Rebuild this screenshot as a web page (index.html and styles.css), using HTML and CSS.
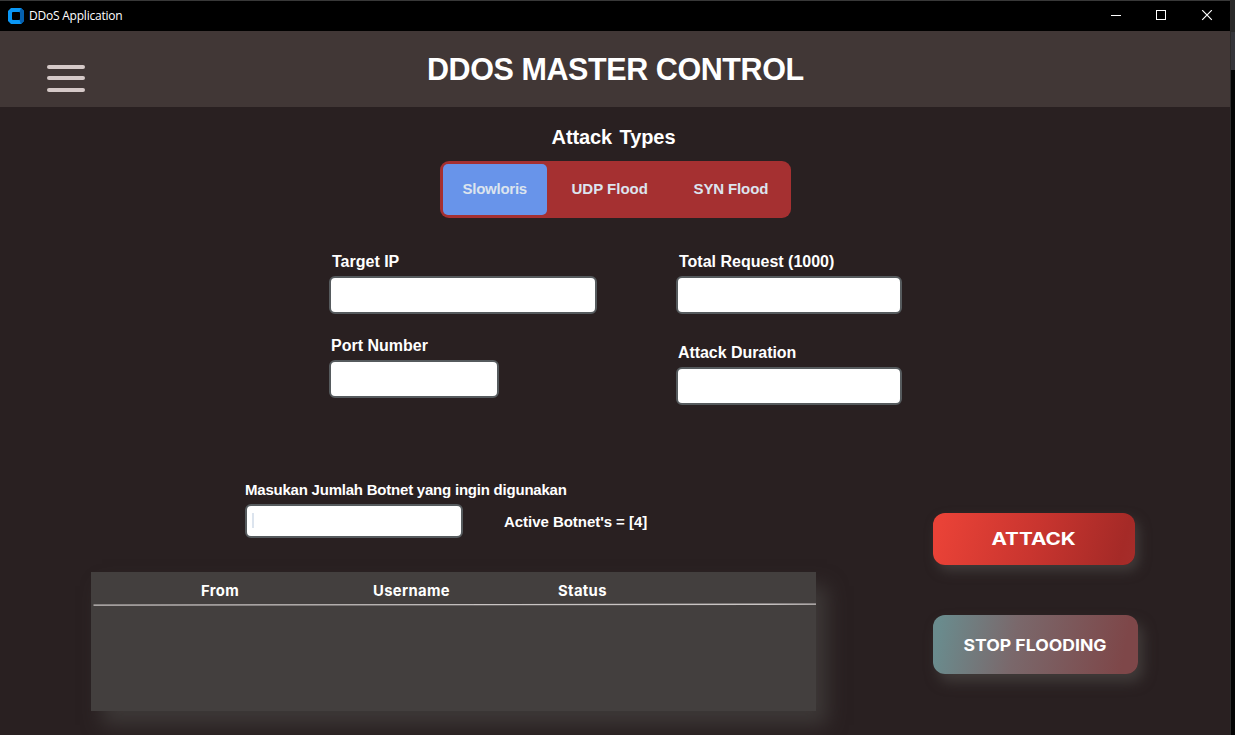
FILE: index.html
```html
<!DOCTYPE html>
<html lang="id">
<head>
<meta charset="utf-8">
<title>DDoS Application</title>
<link rel="stylesheet" href="styles.css">
</head>
<body>
<div class="window">
  <div class="titlebar">
    <svg class="app-icon" width="16" height="16" viewBox="0 0 16 16">
      <path fill="#0a97f5" d="M3 0H13L16 3V13L13 16H3L0 13V3Z"/>
      <path fill="#0560b0" d="M13 0L16 3V13L13 16L11.500 12V4Z"/>
      <rect x="4" y="4" width="8" height="8" rx="1" fill="#000"/>
    </svg>
    <span class="app-name">DDoS Application</span>
    <svg class="controls" width="102" height="12" viewBox="0 0 102 12" fill="none" stroke="#fff">
      <path d="M0 5.500H10"/>
      <rect x="45.500" y="0.500" width="9" height="9"/>
      <path d="M91.200 0.200L100.800 9.800M100.800 0.200L91.200 9.800" stroke-width="1.200"/>
    </svg>
  </div>
  <header class="header">
    <div class="menu"><i></i><i></i><i></i></div>
    <h1>DDOS MASTER CONTROL</h1>
  </header>
  <main class="main">
    <section class="types">
      <h2>Attack Types</h2>
      <div class="segments">
        <span class="segment selected">Slowloris</span>
        <span class="segment udp">UDP Flood</span>
        <span class="segment syn">SYN Flood</span>
      </div>
    </section>
    <section class="form">
      <div class="column target">
        <label class="ip">Target IP</label>
        <div class="field"></div>
        <label class="port">Port Number</label>
        <div class="field short"></div>
      </div>
      <div class="column limits">
        <label class="total">Total Request (1000)</label>
        <div class="field"></div>
        <label class="duration">Attack Duration</label>
        <div class="field"></div>
      </div>
    </section>
    <section class="bottom">
      <div class="bots">
        <label class="amount">Masukan Jumlah Botnet yang ingin digunakan</label>
        <div class="bot-row">
          <div class="field count"><span class="caret"></span></div>
          <span class="active">Active Botnet's = [4]</span>
        </div>
        <div class="table">
          <div class="thead"><span class="from">From</span><span class="user">Username</span><span class="status">Status</span></div>
          <svg class="rule" width="725" height="3" viewBox="0 0 725 3"><path d="M2.500 2.100L725 1.200" stroke="#c9c4c3" stroke-width="1.300"/></svg>
        </div>
      </div>
      <div class="actions">
        <div class="button attack"><span>ATTACK</span></div>
        <div class="button stop"><span>STOP FLOODING</span></div>
      </div>
    </section>
  </main>
</div>
<div class="edge"><div class="edge-top"></div><div class="edge-mid"></div></div>
</body>
</html>
```
FILE: styles.css
```css
* { box-sizing: border-box; }
body { margin: 0; width: 1235px; height: 735px; display: flex; overflow: hidden; background: #000; color: #fff; font-family: "Liberation Sans", Arial, sans-serif; font-weight: bold; }
.window { width: 1230px; height: 735px; display: flex; flex-direction: column; background: #292021; overflow: hidden; }
.edge { width: 5px; background: #040404; border-left: 1px solid #2c2a2a; }
.edge-top { height: 32px; background: #292929; }
.edge-mid { height: 38px; background: #35353a; }

.titlebar { height: 31px; flex: none; display: flex; align-items: center; padding: 0 17px 0 8px; background: #000; border-top: 1px solid #383838; }
.app-icon { margin: -1px 5px 0 0; }
.app-name { font: 12px/16px "Open Sans", "Noto Sans", sans-serif; letter-spacing: -0.220px; white-space: nowrap; }
.controls { margin-left: auto; }

.header { height: 76px; flex: none; display: flex; background: #413736; }
.menu { width: 38.500px; margin: 33.500px 0 0 46.500px; display: flex; flex-direction: column; gap: 7.500px; }
.menu i { height: 4px; border-radius: 2px; background: #d5c9c8; }
h1 { margin: 20px 0 0 342px; font-size: 30.500px; line-height: 36px; letter-spacing: -0.420px; white-space: nowrap; }

.main { height: 628px; }
.types { height: 142px; padding-top: 18px; display: flex; flex-direction: column; align-items: center; }
h2 { margin: 0 3px 12px 0; font-size: 20px; line-height: 24px; letter-spacing: -0.100px; word-spacing: 2px; }
.segments { width: 351px; height: 57px; padding: 3px; display: flex; border-radius: 9px; background: #a53031; color: #dce4ee; font-size: 15px; line-height: 50px; white-space: nowrap; }
.selected { width: 104px; height: 51px; padding-left: 20px; border-radius: 5px; background: #6894ea; letter-spacing: -0.250px; }
.udp { margin-left: 25px; width: 122px; }
.syn { letter-spacing: -0.120px; }

.form { height: 231px; display: flex; padding-left: 329px; font-size: 16px; line-height: 20px; }
.column { display: flex; flex-direction: column; align-items: flex-start; white-space: nowrap; }
.target { width: 347px; }
.ip, .total { margin: 3px 0 4px 3px; }
.port { margin: 22px 0 4px 2px; }
.duration { margin: 29px 0 4px 2px; letter-spacing: -0.060px; }
.field { width: 268px; height: 38px; border: 2px solid #565b5e; border-radius: 6px; background: #fff; }
.target .short { width: 170px; }
.limits .field { width: 226px; }

.bottom { height: 255px; display: flex; }
.bots { width: 933px; padding-left: 91px; font-size: 15px; line-height: 20px; white-space: nowrap; }
.amount { display: block; margin-left: 154px; letter-spacing: -0.220px; }
.bot-row { display: flex; height: 34px; margin: 4px 0 0 154px; }
.field.count { width: 218px; height: 34px; padding: 7px 0 0 5px; }
.caret { display: block; width: 2px; height: 15px; background: #dce4ee; }
.active { margin: 8px 0 0 41px; font-size: 15px; letter-spacing: -0.040px; }
.table { width: 725px; height: 139.500px; margin-top: 33.500px; background: #433f3e; box-shadow: 11px 14px 18px #3d3837; }
.thead { height: 31.500px; display: flex; padding: 9.500px 0 0 110px; font-family: Inter, sans-serif; font-weight: 650; font-size: 14.800px; letter-spacing: 0.350px; }
.from { width: 172px; }
.user { width: 185px; }
.rule { display: block; }
.actions { padding-top: 33px; display: flex; flex-direction: column; gap: 49px; }
.button { display: flex; justify-content: center; border-radius: 12px; font-family: Inter, sans-serif; font-weight: 600; white-space: nowrap; }
.attack { width: 202px; height: 52px; margin-bottom: 1px; font-size: 17px; line-height: 53px; background: linear-gradient(105deg, #e94237 5%, #c9352f 50%, #a52a27 92%, #a52d2a); box-shadow: 4px 6px 12px #413b3a; }
.attack span { font-weight: 700; transform: scaleX(1.220); }
.stop { width: 205px; height: 58.500px; font-size: 16px; line-height: 60px; background: linear-gradient(100deg, #6a8b8d 4%, #7a686b 40%, #7e4749 92%); box-shadow: 5px 8px 13px #413b3a; }
.stop span { transform: scaleX(1.100); font-weight: 650; }
```
